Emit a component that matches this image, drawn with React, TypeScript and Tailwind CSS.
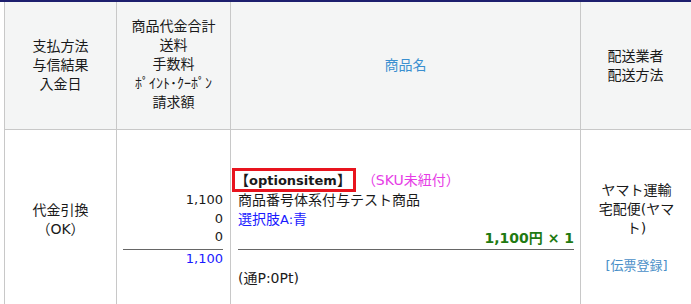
import React from "react";

const font = {
  fontFamily: '"DejaVu Sans", "Noto Sans CJK JP", sans-serif',
};

// CJK runs render slightly larger than the latin text
const J = ({ children }: { children: React.ReactNode }) => (
  <span className="text-[14px]">{children}</span>
);

const HeaderCell = ({
  width,
  children,
  className = "",
}: {
  width: string;
  children: React.ReactNode;
  className?: string;
}) => (
  <div
    className={`${width} shrink-0 border-l border-[#c8c8c8] bg-[#f4f5f5] flex flex-col items-center justify-center text-center text-[14px] ${className}`}
  >
    {children}
  </div>
);

export default function App() {
  return (
    <div
      className="w-[691px] h-[304px] overflow-hidden bg-white border-t-2 border-[#1d1f6e] text-[13px] text-[#1a1a1a] leading-[19px]"
      style={font}
    >
      <div className="pl-1">
        {/* header */}
        <div className="flex h-[128px] border-b border-[#c8c8c8]">
          <HeaderCell width="w-[112px]">
            <div>支払方法</div>
            <div>与信結果</div>
            <div>入金日</div>
          </HeaderCell>
          <HeaderCell width="w-[114px]" className="pb-[3px]">
            <div>商品代金合計</div>
            <div>送料</div>
            <div>手数料</div>
            <div>ﾎﾟｲﾝﾄ･ｸｰﾎﾟﾝ</div>
            <div>請求額</div>
          </HeaderCell>
          <HeaderCell width="w-[350px]">
            <div className="text-[#3a8fd0]">商品名</div>
          </HeaderCell>
          <HeaderCell width="w-[120px]" className="pr-[10px]">
            <div>配送業者</div>
            <div>配送方法</div>
          </HeaderCell>
        </div>

        {/* body */}
        <div className="flex h-[200px]">
          <div className="w-[112px] shrink-0 border-l border-[#c8c8c8] pt-[71px] text-center text-[14px]">
            <div>代金引換</div>
            <div>（OK）</div>
          </div>
          <div className="w-[114px] shrink-0 border-l border-[#c8c8c8] pt-[61px] pl-[6px] pr-[7px] text-right leading-[18.5px]">
            <div>1,100</div>
            <div>0</div>
            <div>0</div>
            <div className="mt-[2px] border-t border-[#666] text-[#1a1aff]">
              1,100
            </div>
          </div>
          <div className="w-[350px] shrink-0 border-l border-[#c8c8c8] pt-[38px] pl-[7px] pr-[6px]">
            <div className="flex items-center">
              <span className="-ml-[6px] h-[24px] border-[3px] border-[#e8141e] pr-[2px] font-bold leading-[18px]">
                <J>【</J>optionsitem<J>】</J>
              </span>
              <span className="ml-[6px] text-[14px] text-[#e63ce6]">（SKU未紐付）</span>
            </div>
            <div className="mt-[-1px] text-[14px]">商品番号体系付与テスト商品</div>
            <div className="text-[#1a1aff]">
              <J>選択肢</J>A:<J>青</J>
            </div>
            <div className="text-right text-[14px] font-bold text-[#1f7a12]">
              1,100円 × 1
            </div>
            <div className="mt-[1px] border-t border-[#666]" />
            <div className="mt-[19px] text-[14px]">(通P:0Pt)</div>
          </div>
          <div className="w-[120px] shrink-0 border-l border-[#c8c8c8] pt-[51px] pl-[14px] pr-[22px] text-center text-[14px]">
            <div>ヤマト運輸</div>
            <div>宅配便(ヤマト)</div>
            <div className="mt-[18px] text-[13px] text-[#4a8fc8]">[伝票登録]</div>
          </div>
        </div>
      </div>
    </div>
  );
}
